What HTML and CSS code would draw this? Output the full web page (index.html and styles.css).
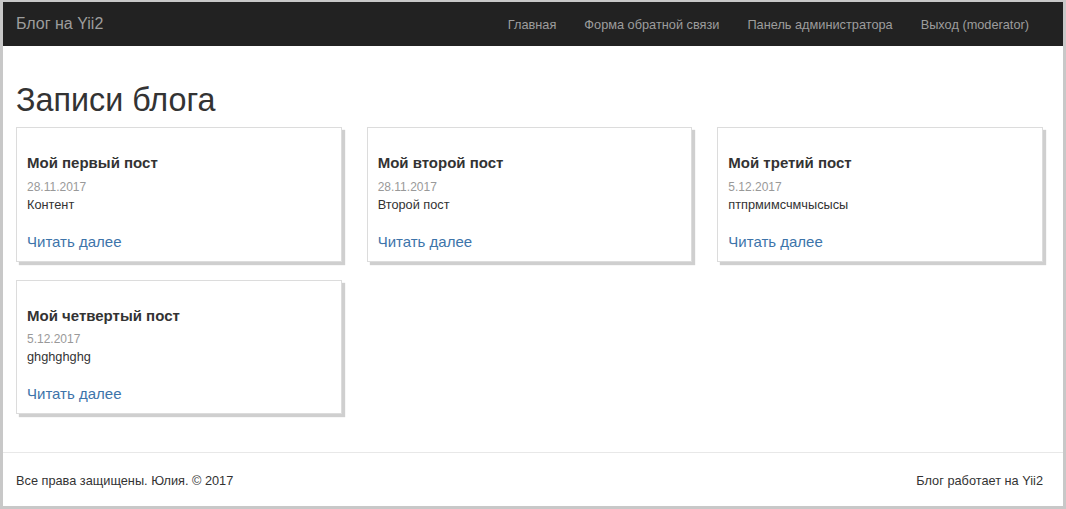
FILE: index.html
```html
<!DOCTYPE html>
<html lang="ru">
<head>
<meta charset="utf-8">
<title>Блог на Yii2</title>
<link rel="stylesheet" href="styles.css">
</head>
<body>
<div class="frame">
  <nav class="navbar">
    <a class="brand" href="#">Блог на Yii2</a>
    <ul class="nav">
      <li><a href="#">Главная</a></li>
      <li><a href="#">Форма обратной связи</a></li>
      <li><a href="#">Панель администратора</a></li>
      <li><a href="#">Выход (moderator)</a></li>
    </ul>
  </nav>
  <main class="content">
    <h1 class="page-title">Записи блога</h1>
    <div class="posts">
      <article class="post">
        <h4 class="post-title">Мой первый пост</h4>
        <div class="post-date">28.11.2017</div>
        <div class="post-text">Контент</div>
        <a class="post-more" href="#">Читать далее</a>
      </article>
      <article class="post">
        <h4 class="post-title">Мой второй пост</h4>
        <div class="post-date">28.11.2017</div>
        <div class="post-text">Второй пост</div>
        <a class="post-more" href="#">Читать далее</a>
      </article>
      <article class="post">
        <h4 class="post-title">Мой третий пост</h4>
        <div class="post-date">5.12.2017</div>
        <div class="post-text">птпрмимсчмчысысы</div>
        <a class="post-more" href="#">Читать далее</a>
      </article>
      <article class="post">
        <h4 class="post-title">Мой четвертый пост</h4>
        <div class="post-date">5.12.2017</div>
        <div class="post-text">ghghghghg</div>
        <a class="post-more" href="#">Читать далее</a>
      </article>
    </div>
  </main>
  <footer class="footer">
    <span>Все права защищены. Юлия. © 2017</span>
    <span>Блог работает на Yii2</span>
  </footer>
</div>
</body>
</html>
```
FILE: styles.css
```css
* { box-sizing: border-box; }
html, body { margin: 0; padding: 0; height: 100%; }
body {
  font-family: "Liberation Sans", Arial, sans-serif;
  color: #333;
  background: #fff;
}
.frame {
  height: 100vh;
  border-style: solid;
  border-color: #c8c8c8;
  border-width: 2px 3px 3px 3px;
  display: flex;
  flex-direction: column;
  background: #fff;
}
.navbar {
  height: 44px;
  flex: none;
  background: #222;
  display: flex;
  align-items: center;
  justify-content: space-between;
  padding: 0 20px 0 13px;
}
.brand {
  color: #9d9d9d;
  font-size: 16px;
  text-decoration: none;
}
.nav {
  list-style: none;
  margin: 0;
  padding: 0;
  display: flex;
}
.nav a {
  display: block;
  padding: 0 14px;
  color: #9d9d9d;
  font-size: 12.75px;
  text-decoration: none;
}
.content {
  padding: 0 20px 0 13px;
}
.page-title {
  margin: 37px 0 9px;
  font-size: 32.3px;
  font-weight: 400;
  line-height: 35px;
  color: #333;
}
.posts {
  display: grid;
  grid-template-columns: repeat(3, 1fr);
  column-gap: 25px;
  row-gap: 18px;
}
.post {
  border: 1px solid #dcdcdc;
  box-shadow: 3px 3px 1px #cfcfcf;
  padding: 27px 10px 9px;
  display: flex;
  flex-direction: column;
  align-items: flex-start;
}
.post-title {
  margin: 0 0 6px;
  font-size: 15px;
  font-weight: 700;
  line-height: 16.5px;
  color: #333;
}
.post-date {
  font-size: 12px;
  line-height: 18px;
  color: #999;
}
.post-text {
  font-size: 12.75px;
  line-height: 18px;
  color: #333;
  margin-bottom: 17px;
}
.post-more {
  font-size: 15px;
  line-height: 21px;
  color: #3d74aa;
  text-decoration: none;
}
.footer {
  margin-top: auto;
  border-top: 1px solid #e8e8e8;
  padding: 19px 20px 17px 13px;
  display: flex;
  justify-content: space-between;
  font-size: 12.75px;
  line-height: 17px;
  color: #333;
}
```
